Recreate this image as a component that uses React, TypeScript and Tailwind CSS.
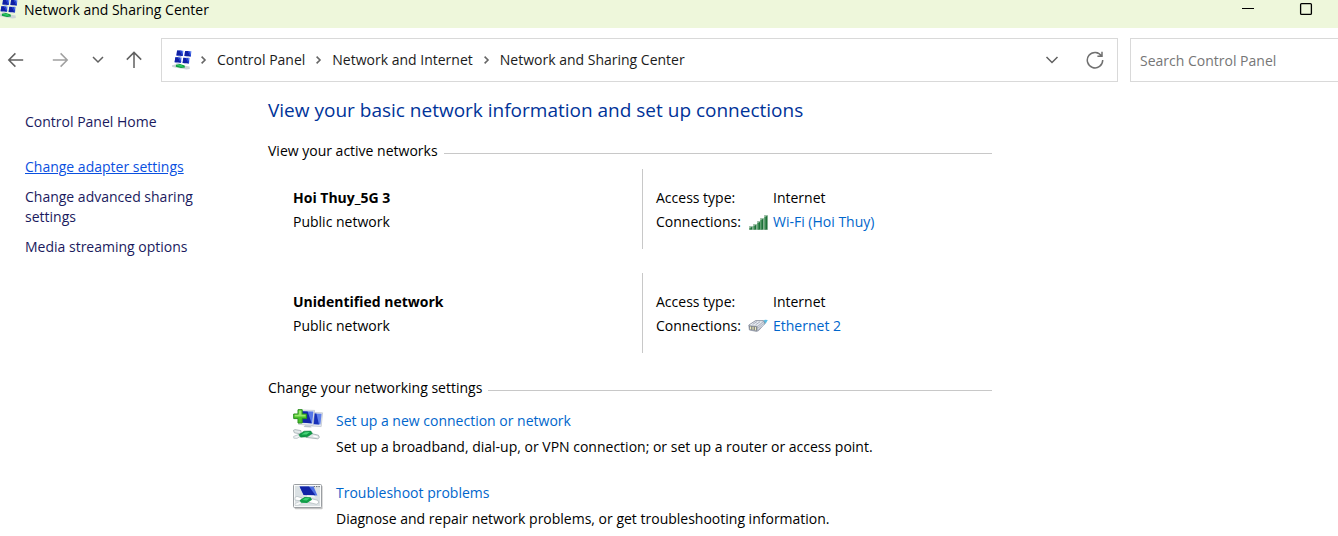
import React from "react";

function NetworkIcon({ className }: { className?: string }) {
  const screens = [
    [4.4, 0.4],
    [12.4, 1],
    [2.6, 7.2],
    [10.6, 7.8],
  ];
  return (
    <svg viewBox="0 0 20 20" className={className} aria-hidden="true">
      {screens.map(([x, y]) => (
        <g key={`${x}-${y}`} transform={`translate(${x} ${y})`}>
          <path d="M.7 0L7 .3 6.4 5.6 0 5.1z" fill="#5b7bea" />
          <path d="M.7 0L3.4 .1 6.2 5.6 0 5.1z" fill="#1020a4" />
          <path d="M3.4 .1L5 .2 6.5 4 6.4 5.6 6 5.5z" fill="#1c3ccc" />
          <path d="M2.2 5.3L4.8 5.5 5 6.5 1.6 6.3z" fill="#b4bed4" />
        </g>
      ))}
      <path d="M0 15.2L4.4 14.2 17.6 16.6 17.8 19 14.4 19.6 .2 17z" fill="#cdd5d6" />
      <path d="M4 14.8L8 14 12.6 15.4 13 17.4 9 18 3.8 16.8z" fill="#0d9f40" />
      <path d="M4.6 15.4L9.4 15.2 11.6 16.4 8 16.6z" fill="#3fdc74" />
    </svg>
  );
}

function Connector({ transform }: { transform?: string }) {
  return (
    <g transform={transform}>
      <path d="M.4 1.4L2 .6 8 1.6 8 5 1.4 3.8z" fill="#e3e9ea" stroke="#96a3a8" strokeWidth=".7" />
      <path d="M.6 7.4L6.4 5.2 9 6.4 4 9.4 .8 9.2z" fill="#eef2f3" stroke="#a5b0b5" strokeWidth=".6" />
      <path d="M16 4L25.4 6.2 26.4 8.4 24.8 9.8 13 8.4z" fill="#dfe6e7" stroke="#93a0a4" strokeWidth=".7" />
      <path d="M5.8 5.8L11 2.2 17.8 2 19.4 4.4 14.4 7.8 7.6 8.2z" fill="#0f9a45" stroke="#0b8038" strokeWidth=".5" />
      <path d="M8.4 5.6L12 3.2 17 3 13.6 5.6z" fill="#48d67a" />
      <path d="M20 6.2L24.4 7.2 24.8 8.4 20.4 7.8z" fill="#fff" />
    </g>
  );
}

function AddConnectionIcon() {
  return (
    <svg viewBox="0 0 32 32" className="mt-px size-8 shrink-0" aria-hidden="true">
      <path d="M19 3.4L29.6 3.8 28.2 17.6 18 17z" fill="#e6e9ee" stroke="#b4bac4" strokeWidth=".6" />
      <path d="M20 4.4L28.6 4.8 27.4 15.6 19 15z" fill="#5f80ea" />
      <path d="M20 4.4L23.4 4.5 26 15.5 19 15z" fill="#1730b8" />
      <path d="M6.6 1L21.6 1.4 20.2 16.4 5.6 15.4z" fill="#e6eaf0" stroke="#b4bac4" strokeWidth=".6" />
      <path d="M7.8 2.2L20.4 2.6 19.2 14.4 6.8 13.6z" fill="#5677e8" />
      <path d="M7.8 2.2L14.6 2.4 18.6 14.3 6.8 13.6z" fill="#1226a8" />
      <path d="M12 16.2L17.4 16.6 18.6 18.4 10.6 18z" fill="#bcc4cf" />
      <Connector transform="translate(0 20)" />
      <path d="M5 .7H9.2V5H13.6V9.6H9.2V14H5V9.6H.7V5H5z" fill="#47c02a" stroke="#2a8f1e" />
      <path d="M5.8 1.6H8.4V5.8H12.6V7.4H1.6V5.8H5.8z" fill="#9ae86f" />
    </svg>
  );
}

function TroubleshootIcon() {
  return (
    <svg viewBox="0 0 32 32" className="mt-px size-8 shrink-0" aria-hidden="true">
      <rect x="1.6" y="4.8" width="28" height="23.4" rx="1" fill="#c4c4c4" />
      <rect x=".5" y="3.5" width="28" height="23" rx="1" fill="#fafbfb" stroke="#9a9ea2" />
      <rect x="2" y="5" width="25" height="20" fill="#dbe1e4" />
      <path d="M20.6 5.6H22M23 5.6h1.4M25.4 5.6h1.4" stroke="#606970" />
      <path d="M6.6 5.4L20.6 5.4 24.4 14.4 10.6 14z" fill="#4f70e2" />
      <path d="M6.6 5.4L16 5.4 22.4 14.3 10.6 14z" fill="#1224a6" />
      <path d="M14 14.2L21 14.4 22.6 16.4 14.4 16z" fill="#f4f6f8" />
      <path d="M2 16.4L4 15.4 9 17 8.4 20 2 19z" fill="#fff" stroke="#aab4b8" strokeWidth=".6" />
      <path d="M2 22.6L8 20 10.6 21.4 5 24.4 2 24.4z" fill="#f7f9f9" stroke="#b4bdc1" strokeWidth=".5" />
      <path d="M16 17L25 19.4 25.8 22 23.4 23.2 14 21z" fill="#fff" stroke="#a3aeb2" strokeWidth=".6" />
      <path d="M6.6 19.2L11.6 16 17.6 16.2 19 18.8 14 22 8 21.8z" fill="#109e48" />
      <path d="M9.4 19L12.2 17 16.8 17.2 13.6 19.6z" fill="#3fd474" />
    </svg>
  );
}

function SignalIcon() {
  const bars = [
    [0, 12],
    [4, 10],
    [8, 7],
    [11, 4],
    [15, 1],
  ];
  return (
    <svg viewBox="0 0 19 17" className="ml-px h-[17px] w-[19px]" aria-hidden="true">
      {bars.map(([x, y]) => (
        <g key={x}>
          <rect x={x + 0.1} y={y} width="3.7" height={16 - y} fill="#9cbfa6" />
          <path d={`M${x + 0.6} ${y + 2.2}L${x + 3.3} ${y + 0.7}V15.4H${x + 0.6}z`} fill="#1d6f38" />
          <rect x={x + 0.6} y={y + 2} width=".9" height={13.4 - y} fill="#5aa86d" />
        </g>
      ))}
    </svg>
  );
}

function EthernetIcon() {
  return (
    <svg viewBox="0 0 20 14" className="h-[14px] w-5" aria-hidden="true">
      <path d="M13 2.6L17 .8 19.8 1 18.2 3.8 15.4 6.4z" fill="#58bde4" />
      <path d="M.8 6L7.6 1.6 15.4 1.6 17 4.4 10.6 11.6 8.6 12.4 1.4 11z" fill="#b4bac6" stroke="#7f8796" strokeWidth=".7" />
      <path d="M1.6 6L7.8 2.2 15 2.2 9.4 6.8z" fill="#e9ecf2" />
      <path d="M4.6 5.4L9 2.6M7.6 5.8L12 2.8" stroke="#98a1b0" strokeWidth=".8" />
      <path d="M10 8L15.8 3.6M10 10L16 5.4" stroke="#dfe4ec" strokeWidth=".8" />
      <path d="M1.2 6.8L9.2 7.6 9 11.8 1.8 10.6z" fill="#777d84" />
      <path d="M2.6 7.6V10.2M5 7.8V10.8M7.5 8V11.2" stroke="#f0ebbc" strokeWidth="1.2" />
    </svg>
  );
}

function Stroke({ d, className }: { d: string; className: string }) {
  return (
    <svg viewBox="0 0 18 18" fill="none" stroke="currentColor" strokeWidth="1.5" className={className} aria-hidden="true">
      <path d={d} />
    </svg>
  );
}

const CHEVRON_DOWN = "M3.5 6L9 11.5L14.5 6";

function Crumb({ children }: { children: React.ReactNode }) {
  return (
    <li className="flex items-center">
      <svg viewBox="0 0 8 10" fill="none" stroke="#666" strokeWidth="1.6" className="mr-[9px] h-[10px] w-2" aria-hidden="true">
        <path d="M1.6 1.6L5 5L1.6 8.4" />
      </svg>
      <a href="#" className="mr-[10px] whitespace-nowrap text-[#1b1b1b]">
        {children}
      </a>
    </li>
  );
}

function SectionTitle({ children }: { children: React.ReactNode }) {
  return (
    <div className="flex items-center gap-[6px]">
      <h2 className="leading-5">{children}</h2>
      <div className="mt-1 h-px flex-1 bg-[#c8c8c8]" />
    </div>
  );
}

type NetworkProps = { name: string; connection: string; icon: React.ReactNode };

function Network({ name, connection, icon }: NetworkProps) {
  return (
    <section className="flex h-20 pl-[25px] leading-6">
      <div className="w-[349px] pt-[17px]">
        <h3 className="font-bold">{name}</h3>
        <p>Public network</p>
      </div>
      <dl className="grid flex-1 grid-cols-[92px_25px_1fr] content-start border-l border-[#c8c8c8] pt-[17px] pl-[13px]">
        <dt>Access type:</dt>
        <dd className="col-start-3">Internet</dd>
        <dt>Connections:</dt>
        <dd className="col-span-2 flex items-center">
          <span className="flex w-[25px] items-center">{icon}</span>
          <a href="#" className="text-[#0066cc]">
            {connection}
          </a>
        </dd>
      </dl>
    </section>
  );
}

function Task({ icon, title, children }: { icon: React.ReactNode; title: string; children: React.ReactNode }) {
  return (
    <li className="flex gap-[11px]">
      {icon}
      <div className="leading-[26px]">
        <a href="#" className="block text-[#0066cc]">
          {title}
        </a>
        <p>{children}</p>
      </div>
    </li>
  );
}

export default function App() {
  return (
    <div className="bg-white font-['Open_Sans','Noto_Sans',sans-serif] text-[14px] text-black">
      <header className="flex h-7 items-start justify-between overflow-hidden bg-[#eef7db]">
        <div className="flex items-center">
          <NetworkIcon className="-mt-[3px] -ml-[2px] size-5" />
          <h1 className="ml-[6px] leading-5">Network and Sharing Center</h1>
        </div>
        <div className="flex gap-10 pr-[23px]">
          <button type="button" aria-label="Minimize" className="size-[18px]">
            <svg viewBox="0 0 18 18" aria-hidden="true">
              <path d="M3 8.5H15" stroke="#000" />
            </svg>
          </button>
          <button type="button" aria-label="Maximize" className="size-[18px]">
            <svg viewBox="0 0 18 18" aria-hidden="true">
              <rect x="3.6" y="3.6" width="10.8" height="10.8" rx="1" fill="none" stroke="#000" strokeWidth="1.3" />
            </svg>
          </button>
        </div>
      </header>

      <div className="flex items-center pt-[10px]">
        <nav aria-label="History" className="flex w-[161px] shrink-0 items-center pl-[7px] text-[#606060]">
          <button type="button" aria-label="Back">
            <Stroke className="size-[18px]" d="M16.2 9H2M8.4 2.4L1.8 9L8.4 15.6" />
          </button>
          <button type="button" aria-label="Forward" className="ml-[26px] text-[#a0a0a0]">
            <Stroke className="size-[18px]" d="M1.8 9H16M9.6 2.4L16.2 9L9.6 15.6" />
          </button>
          <button type="button" aria-label="Recent locations" className="ml-5">
            <Stroke className="size-[18px]" d="M4 6L9 11L14 6" />
          </button>
          <button type="button" aria-label="Up" className="ml-[18px]">
            <Stroke className="size-[18px]" d="M9 17V1.6M1.8 8.6L9 1.4L16.2 8.6" />
          </button>
        </nav>
        <div className="flex h-11 flex-1 items-center border border-[#d9d9d9] pr-[13px] pb-px pl-[10px]">
          <NetworkIcon className="size-5 shrink-0" />
          <ol className="ml-2 flex flex-1">
            <Crumb>Control Panel</Crumb>
            <Crumb>Network and Internet</Crumb>
            <Crumb>Network and Sharing Center</Crumb>
          </ol>
          <button type="button" aria-label="Previous locations" className="text-[#606060]">
            <Stroke className="size-[18px]" d={CHEVRON_DOWN} />
          </button>
          <button type="button" aria-label="Refresh" className="ml-[25px] text-[#707070]">
            <Stroke className="size-[18px]" d="M15.6 5.2A7.7 7.7 0 1 0 16.7 9M16 .8V5.3H11.4" />
          </button>
        </div>
        <input
          type="search"
          aria-label="Search Control Panel"
          placeholder="Search Control Panel"
          className="ml-3 h-11 w-[208px] shrink-0 border border-r-0 border-[#d9d9d9] px-[9px] placeholder:text-[#767676]"
        />
      </div>

      <div className="flex">
        <aside className="w-[268px] shrink-0 pt-[30px] pr-[60px] pl-[25px] leading-5 text-[#1a1a5e]">
          <a href="#">Control Panel Home</a>
          <ul className="mt-[25px] flex flex-col gap-[10px]">
            <li>
              <a href="#" className="text-[#0a50e0] underline">
                Change adapter settings
              </a>
            </li>
            <li>
              <a href="#">Change advanced sharing settings</a>
            </li>
            <li>
              <a href="#">Media streaming options</a>
            </li>
          </ul>
        </aside>

        <main className="max-w-[724px] flex-1 pt-4">
          <p className="text-[19px] leading-6 text-[#003399]">View your basic network information and set up connections</p>
          <div className="mt-[19px]">
            <SectionTitle>View your active networks</SectionTitle>
            <div className="mt-2 flex flex-col gap-6">
              <Network name="Hoi Thuy_5G 3" connection="Wi-Fi (Hoi Thuy)" icon={<SignalIcon />} />
              <Network name="Unidentified network" connection="Ethernet 2" icon={<EthernetIcon />} />
            </div>
          </div>
          <div className="mt-[25px]">
            <SectionTitle>Change your networking settings</SectionTitle>
            <ul className="mt-[10px] flex flex-col gap-5 pl-[25px]">
              <Task icon={<AddConnectionIcon />} title="Set up a new connection or network">
                Set up a broadband, dial-up, or VPN connection; or set up a router or access point.
              </Task>
              <Task icon={<TroubleshootIcon />} title="Troubleshoot problems">
                Diagnose and repair network problems, or get troubleshooting information.
              </Task>
            </ul>
          </div>
        </main>
      </div>
    </div>
  );
}
